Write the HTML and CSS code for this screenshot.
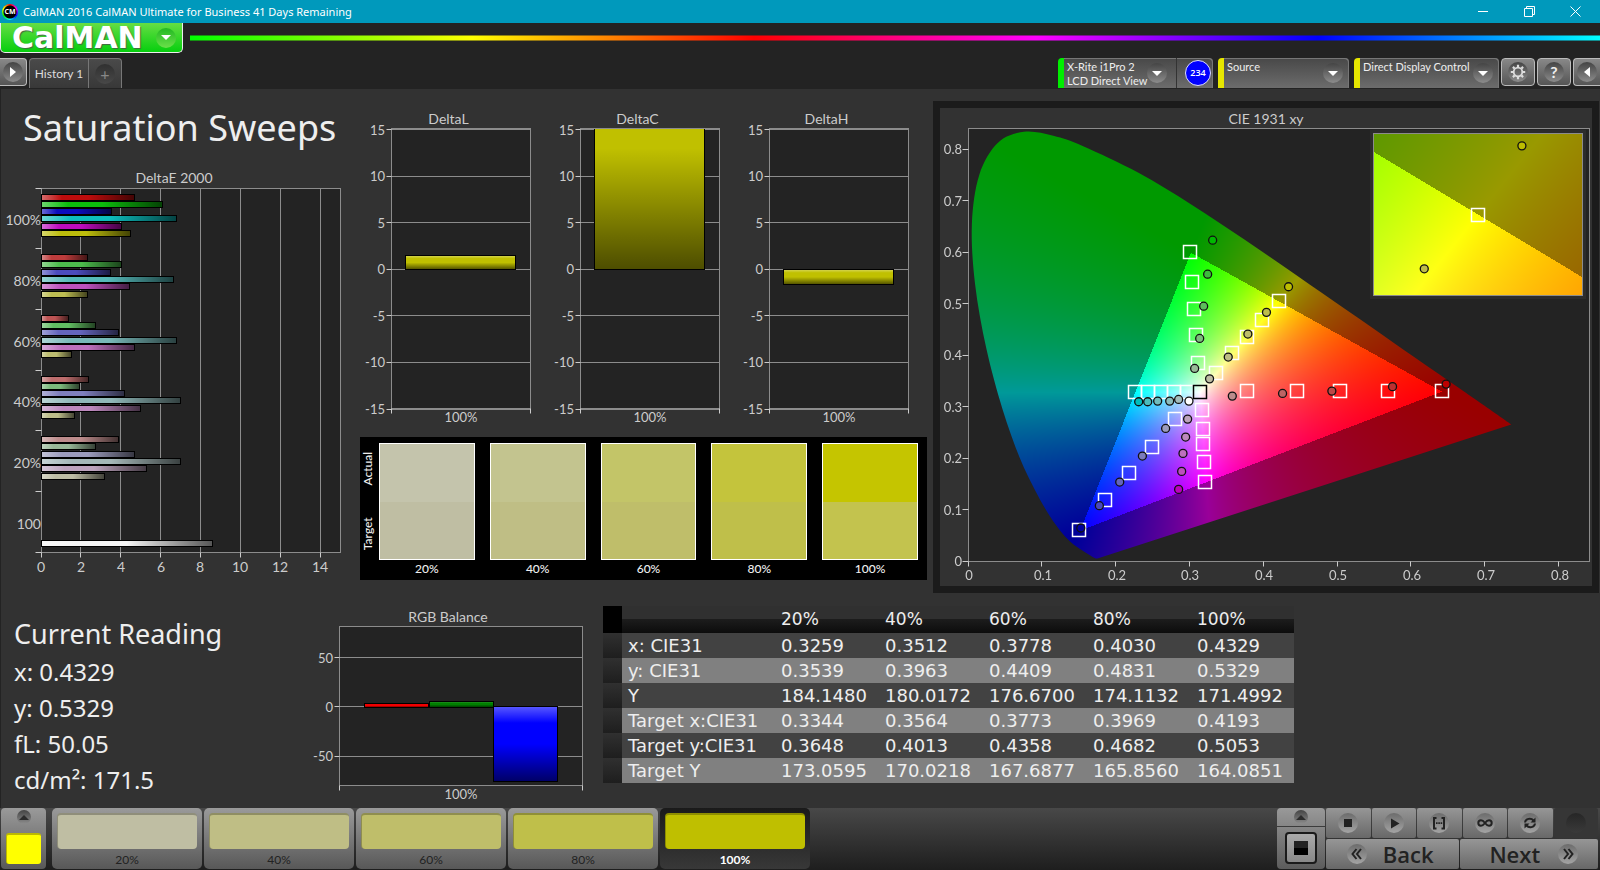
FILE: index.html
```html
<!DOCTYPE html>
<html lang="en">
<head>
    <meta charset="UTF-8">
    <meta name="viewport" content="width=device-width, initial-scale=1.0">
    <title>CalMAN 2016</title>
    <link rel="stylesheet" href="styles.css">
</head>
<body>
    <!-- Window title bar -->
    <div class="titlebar">
        <span class="app-icon">CM</span>
        <span class="app-title">CalMAN 2016 CalMAN Ultimate for Business 41 Days Remaining</span>
        <div class="window-buttons">
            <button aria-label="Minimize"><svg width="11" height="11" viewBox="0 0 11 11"><path d="M0 5.5H10"/></svg></button>
            <button aria-label="Restore"><svg width="11" height="11" viewBox="0 0 11 11"><path d="M.5 2.5H8.5V10.5H.5ZM2.5 2.5V.5H10.5V8.5H8.5"/></svg></button>
            <button aria-label="Close"><svg width="11" height="11" viewBox="0 0 11 11"><path d="M.5 .5L10.5 10.5M10.5 .5L.5 10.5"/></svg></button>
        </div>
    </div>

    <header>
        <div class="brand-row">
            <button class="logo">CalMAN <span class="logo-arrow"><span class="arrow-down"></span></span></button>
            <div class="rainbow"></div>
        </div>
        <div class="toolbar">
            <button class="tool-btn play-btn" aria-label="Show pages"><span class="round"><span class="arrow-right"></span></span></button>
            <div class="tabs">
                <button class="tab">History 1</button>
                <button class="tab tab-add" aria-label="Add history"><span class="round dark">+</span></button>
            </div>
            <div class="devices">
                <div class="device meter">
                    <button class="device-name">X-Rite i1Pro 2<br>LCD Direct View<span class="round"><span class="arrow-down"></span></span></button>
                    <span class="meter-count">234</span>
                </div>
                <div class="device source">
                    <button class="device-name">Source<span class="round"><span class="arrow-down"></span></span></button>
                </div>
                <div class="device display">
                    <button class="device-name">Direct Display Control<span class="round"><span class="arrow-down"></span></span></button>
                </div>
                <button class="tool-btn" aria-label="Settings"><span class="round">
                    <svg width="16" height="16" viewBox="0 0 16 16"><circle cx="8" cy="8" r="4.3" fill="none" stroke="#ddd" stroke-width="1.8"/><path d="M8 .8V3M8 13v2.2M.8 8H3M13 8h2.2M2.9 2.9l1.6 1.6M11.5 11.5l1.6 1.6M2.9 13.1l1.6-1.6M11.5 4.5l1.6-1.6" stroke="#ddd" stroke-width="2.2"/></svg>
                </span></button>
                <button class="tool-btn" aria-label="Help"><span class="round">?</span></button>
                <button class="tool-btn last" aria-label="Collapse"><span class="round"><span class="arrow-left"></span></span></button>
            </div>
        </div>
    </header>

    <main>
        <div class="top-row">
            <section class="sweeps">
                <h1>Saturation Sweeps</h1>
                <figure>
                    <figcaption>DeltaE 2000</figcaption>
                    <svg class="chart" id="delta-e"></svg>
                </figure>
            </section>

            <section class="middle">
                <div class="deltas">
                    <figure>
                        <figcaption>DeltaL</figcaption>
                        <svg class="chart" id="delta-l"></svg>
                    </figure>
                    <figure>
                        <figcaption>DeltaC</figcaption>
                        <svg class="chart" id="delta-c"></svg>
                    </figure>
                    <figure>
                        <figcaption>DeltaH</figcaption>
                        <svg class="chart" id="delta-h"></svg>
                    </figure>
                </div>
                <!-- Actual / target patches -->
                <div class="compare">
                    <div class="compare-labels"><span>Actual</span><span>Target</span></div>
                    <div class="patch p20"><div><i></i><b></b></div>20%</div>
                    <div class="patch p40"><div><i></i><b></b></div>40%</div>
                    <div class="patch p60"><div><i></i><b></b></div>60%</div>
                    <div class="patch p80"><div><i></i><b></b></div>80%</div>
                    <div class="patch p100"><div><i></i><b></b></div>100%</div>
                </div>
            </section>

            <section class="cie">
                <figure>
                    <figcaption>CIE 1931 xy</figcaption>
                    <div class="cie-plot">
                        <canvas id="cie-canvas"></canvas>
                        <svg class="chart" id="cie-chart"></svg>
                    </div>
                </figure>
            </section>
        </div>

        <div class="bottom-row">
            <section class="reading">
                <h2>Current Reading</h2>
                <p>x: 0.4329</p>
                <p>y: 0.5329</p>
                <p>fL: 50.05</p>
                <p>cd/m²: 171.5</p>
            </section>
            <figure class="balance">
                <figcaption>RGB Balance</figcaption>
                <svg class="chart" id="rgb-balance"></svg>
            </figure>
            <div class="data">
                <table>
                    <thead>
                        <tr><td class="grip"></td><th></th><th>20%</th><th>40%</th><th>60%</th><th>80%</th><th>100%</th></tr>
                    </thead>
                    <tbody>
                        <tr><td class="grip"></td><th>x: CIE31</th><td>0.3259</td><td>0.3512</td><td>0.3778</td><td>0.4030</td><td>0.4329</td></tr>
                        <tr><td class="grip"></td><th>y: CIE31</th><td>0.3539</td><td>0.3963</td><td>0.4409</td><td>0.4831</td><td>0.5329</td></tr>
                        <tr><td class="grip"></td><th>Y</th><td>184.1480</td><td>180.0172</td><td>176.6700</td><td>174.1132</td><td>171.4992</td></tr>
                        <tr><td class="grip"></td><th>Target x:CIE31</th><td>0.3344</td><td>0.3564</td><td>0.3773</td><td>0.3969</td><td>0.4193</td></tr>
                        <tr><td class="grip"></td><th>Target y:CIE31</th><td>0.3648</td><td>0.4013</td><td>0.4358</td><td>0.4682</td><td>0.5053</td></tr>
                        <tr><td class="grip"></td><th>Target Y</th><td>173.0595</td><td>170.0218</td><td>167.6877</td><td>165.8560</td><td>164.0851</td></tr>
                    </tbody>
                </table>
            </div>
        </div>
    </main>

    <footer>
        <button class="picker" aria-label="Pattern colour"><span class="round small"><span class="arrow-up"></span></span><span class="chip"></span></button>
        <div class="steps">
            <button class="step p20"><b></b>20%</button>
            <button class="step p40"><b></b>40%</button>
            <button class="step p60"><b></b>60%</button>
            <button class="step p80"><b></b>80%</button>
            <button class="step p100 active"><b></b>100%</button>
        </div>
        <div class="window-size">
            <button aria-label="More"><span class="round small"><span class="arrow-up"></span></span></button>
            <button aria-label="Pattern window"><span class="window-icon"></span></button>
        </div>
        <div class="controls">
            <div class="control-row">
                <button aria-label="Stop"><span class="round lit"><svg width="20" height="20" viewBox="0 0 20 20"><path d="M6 6h8v8H6z"/></svg></span></button>
                <button aria-label="Read"><span class="round lit"><svg width="20" height="20" viewBox="0 0 20 20"><path d="M7 5.5L15.5 10.5L7 15.5Z"/></svg></span></button>
                <button aria-label="Read series"><span class="round lit"><svg width="20" height="20" viewBox="0 0 20 20"><path class="line" d="M7.5 5H5v10.5H7.5M12.5 5H15v10.5H12.5"/><path d="M7 9.3h1.6v1.6H7zM9.3 9.3h1.6v1.6H9.3zM11.6 9.3h1.6v1.6h-1.6z"/></svg></span></button>
                <button aria-label="Read continuously"><span class="round lit"><svg width="20" height="20" viewBox="0 0 20 20"><path class="line" d="M10 10C8.5 8 7.5 7.3 6 7.3A2.7 2.7 0 0 0 6 12.7C7.5 12.7 8.5 12 10 10S12.5 7.3 14 7.3A2.7 2.7 0 0 1 14 12.7C12.5 12.7 11.5 12 10 10Z"/></svg></span></button>
                <button aria-label="Repeat"><span class="round lit"><svg width="20" height="20" viewBox="0 0 20 20"><path class="line" d="M5 9.5C5.5 5.5 11 4.5 13.5 7.5M15 10.5C14.5 14.5 9 15.5 6.5 12.5"/><path d="M15.5 4.5V9.5H10.5ZM4.5 15.5V10.5H9.5Z"/></svg></span></button>
                <button class="off" aria-label="Record" disabled><span class="round dark"></span></button>
            </div>
            <div class="control-row nav-row">
                <button class="back"><span class="round lit"><svg width="20" height="20" viewBox="0 0 20 20"><path class="line" d="M9.5 5L5.5 10L9.5 15M14 5L10 10L14 15"/></svg></span>Back</button>
                <button class="next">Next<span class="round lit"><svg width="20" height="20" viewBox="0 0 20 20"><path class="line" d="M6 5L10 10L6 15M10.5 5L14.5 10L10.5 15"/></svg></span></button>
            </div>
        </div>
    </footer>

    <script src="charts.js"></script>
</body>
</html>
```

FILE: styles.css
```css
* {
    box-sizing: border-box;
}
body {
    font-family: Lato, "Noto Sans", sans-serif;
    font-size: 13px;
    margin: 0;
    min-height: 100vh;
    display: flex;
    flex-direction: column;
    background-color: #232323;
    color: #ccc;
}
button {
    font: inherit;
    color: inherit;
    border: 0;
    padding: 0;
    margin: 0;
    background: none;
}
h1, h2, p, figure {
    margin: 0;
    font-weight: normal;
}

/* Title bar */
.titlebar {
    display: flex;
    align-items: center;
    height: 23px;
    padding: 0 2px;
    background-color: #0099bc;
    color: white;
    font-family: "Noto Sans", sans-serif;
    font-size: 11px;
}
.app-icon {
    width: 16px;
    height: 16px;
    margin-right: 5px;
    border-radius: 50%;
    background: radial-gradient(circle, #000 0 6px, transparent 7px), conic-gradient(red, magenta, blue, cyan, lime, yellow, red);
    font-size: 7px;
    font-weight: bold;
    line-height: 16px;
    text-align: center;
}
.window-buttons {
    margin-left: auto;
    display: flex;
}
.window-buttons button {
    width: 46px;
    height: 23px;
}
.window-buttons svg {
    display: block;
    margin: 0 auto;
    fill: none;
    stroke: white;
}

/* Header */
.brand-row {
    display: flex;
    height: 30px;
}
.logo {
    display: flex;
    align-items: center;
    justify-content: space-between;
    width: 183px;
    padding: 0 6px 0 11px;
    border: solid #eee;
    border-width: 0 1px 1px;
    border-radius: 0 0 5px 5px;
    background: linear-gradient(#66dd44, #06cf0e);
    color: white;
    font-family: "DejaVu Sans", sans-serif;
    font-size: 30px;
    font-weight: bold;
    line-height: 28px;
    text-shadow: 1px 1px 1px #464;
}
.logo-arrow {
    display: flex;
    align-items: center;
    justify-content: center;
    width: 20px;
    height: 20px;
    border-radius: 50%;
    background: linear-gradient(#22b822, #6be04a);
}
.rainbow {
    flex: 1;
    height: 6px;
    margin: 12px 0 0 7px;
    background: linear-gradient(90deg, #0f0, #ff0, #f00, #f0f, #00f, #0ff);
    border: solid rgba(35, 35, 35, 0.5);
    border-width: 1px 0;
}
.toolbar {
    display: flex;
    height: 36px;
    padding-top: 5px;
}
.round {
    display: flex;
    align-items: center;
    justify-content: center;
    width: 20px;
    height: 20px;
    border-radius: 50%;
    background: linear-gradient(#444, #8c8c8c);
    color: #eee;
    font-size: 16px;
    font-weight: bold;
    line-height: 20px;
}
.round.small {
    width: 14px;
    height: 14px;
}
.round.small .arrow-up {
    border-width: 0 5px 5px;
    border-bottom-color: #2c2c2c;
}
.round.dark {
    background: linear-gradient(#303030, #484848);
    color: #888;
    font-weight: normal;
}
.round.lit {
    background: linear-gradient(#6c6c6c, #a4a4a4);
}
.round.lit svg {
    fill: #222;
}
.round.lit .line {
    fill: none;
    stroke: #222;
    stroke-width: 2;
}
.arrow-down, .arrow-up, .arrow-left, .arrow-right {
    border: solid transparent;
}
.arrow-down {
    border-width: 5px 5px 0;
    border-top-color: white;
}
.arrow-up {
    border-width: 0 5px 5px;
    border-bottom-color: white;
}
.arrow-right {
    border-width: 5px 0 5px 6px;
    border-left-color: white;
}
.arrow-left {
    border-width: 5px 6px 5px 0;
    border-right-color: white;
}
.tool-btn {
    display: flex;
    align-items: center;
    justify-content: center;
    width: 34px;
    height: 28px;
    border: 1px solid #bbb;
    border-radius: 4px;
    background: linear-gradient(#888, #555);
}
.play-btn {
    width: 27px;
    border-left: 0;
    border-radius: 0 4px 4px 0;
}
.tool-btn.last {
    width: 27px;
    border-right: 0;
    border-radius: 4px 0 0 4px;
}
.tabs {
    display: flex;
    height: 30px;
    margin-left: 2px;
    border: 1px solid #777;
    border-bottom: 0;
    border-radius: 4px 4px 0 0;
    background: linear-gradient(#4a4a4a, #383838);
}
.tab {
    width: 58px;
    font-size: 12px;
    color: #ddd;
}
.tab-add {
    display: flex;
    align-items: center;
    justify-content: center;
    width: 33px;
    border-left: 1px solid #777;
}
.devices {
    display: flex;
    gap: 2px;
    margin-left: auto;
}
.device {
    display: flex;
    height: 30px;
    margin-right: 3px;
    border-radius: 4px 4px 0 0;
    border-left: 6px solid #e6e600;
    background: linear-gradient(#484848, #6c6c6c);
    box-shadow: inset -1px 1px #777;
}
.device-name {
    position: relative;
    width: 100%;
    padding: 1px 0 0 3px;
    color: #eee;
    font-size: 11px;
    line-height: 14px;
    text-align: left;
    display: block;
    height: 30px;
}
.device-name .round {
    position: absolute;
    right: 6px;
    top: 5px;
}
.source .device-name, .display .device-name {
    padding-bottom: 14px;
}
.meter {
    width: 155px;
    border-color: #0e0;
}
.source {
    width: 131px;
}
.display {
    width: 145px;
    margin-right: 0;
}
.meter-count {
    flex: none;
    width: 26px;
    height: 26px;
    margin: 2px 2px 0 8px;
    border: 1px solid #ddf;
    border-radius: 50%;
    background-color: #00f;
    color: white;
    font-family: "Open Sans", sans-serif;
    font-size: 9px;
    font-weight: 600;
    line-height: 24px;
    text-align: center;
}
.meter .device-name {
    border-right: 1px solid #333;
}
.meter .device-name .round {
    right: 9px;
}

/* Main area */
main {
    flex: 1;
    display: grid;
    grid-template-rows: 504fr 215fr;
    border-left: 1px solid #232323;
    background-color: #323232;
}
.top-row {
    display: grid;
    grid-template-columns: 349fr 583fr 667fr;
}
figure {
    display: flex;
    flex-direction: column;
}
figcaption {
    height: 18px;
    font-size: 14px;
    line-height: 18px;
    text-align: center;
}
.chart {
    display: block;
    flex: 1;
    width: 100%;
    min-height: 0;
    height: 0;
    overflow: visible;
    font-size: 13px;
}
.chart text {
    fill: #ccc;
}
.sweeps, .middle {
    display: flex;
    flex-direction: column;
    padding-bottom: 13px;
}
.sweeps figure {
    flex: 1;
}
.sweeps figcaption {
    padding-right: 3px;
}
.sweeps .chart {
    font-size: 14px;
}
h1 {
    height: 80px;
    padding-left: 22px;
    color: #eee;
    font-family: "Noto Sans", sans-serif;
    font-size: 36px;
    line-height: 78px;
}
.deltas {
    flex: 1;
    display: flex;
    padding: 21px 16px 10px 0;
}
.deltas figure {
    flex: 1;
}
.deltas figcaption {
    padding-left: 8px;
}

/* Actual / target patches */
.compare {
    display: flex;
    gap: 15px;
    height: 143px;
    margin: 0 6px 0 10px;
    padding: 6px 9px 0 0;
    background-color: black;
    color: #eee;
    font-size: 12px;
    font-weight: 500;
}
.compare-labels {
    display: flex;
    flex-direction: row-reverse;
    justify-content: space-around;
    width: 130px;
    height: 16px;
    margin: 50px -69px 0 -57px;
    transform: rotate(-90deg);
    line-height: 16px;
}
.patch {
    flex: 1;
    line-height: 18px;
    text-align: center;
}
.patch div {
    display: flex;
    flex-direction: column;
    height: 117px;
    border: 1px solid white;
}
.patch i, .patch b {
    flex: 1;
}
.p20 i { background-color: #c4c4ac; }
.p20 b { background-color: #bfbea3; }
.p40 i { background-color: #c3c48f; }
.p40 b { background-color: #bfbe85; }
.p60 i { background-color: #c3c568; }
.p60 b { background-color: #bfbe6a; }
.p80 i { background-color: #c4c43c; }
.p80 b { background-color: #bfbf4a; }
.p100 i { background-color: #c5c500; }
.p100 b { background-color: #c3c34e; }

/* CIE diagram */
.cie {
    display: flex;
    padding: 12px 1px 0 0;
}
.cie figure {
    flex: 1;
    border: 7px solid #1b1b1b;
}
.cie figcaption {
    height: 20px;
    line-height: 21px;
}
.cie-plot {
    flex: 1;
    display: flex;
    position: relative;
}
.cie-plot canvas {
    position: absolute;
    left: 0;
    top: 0;
    width: 100%;
    height: 100%;
}
.cie-plot .chart {
    position: relative;
    height: auto;
}

/* Bottom row */
.bottom-row {
    display: grid;
    grid-template-columns: 310fr 292fr 997fr;
}
.reading {
    padding: 21px 0 0 13px;
    color: #eee;
    font-family: "Noto Sans", sans-serif;
}
h2 {
    font-size: 27px;
    line-height: 40px;
}
.reading p {
    font-size: 24px;
    line-height: 36px;
}
.balance {
    padding: 15px 0 5px;
}
.balance figcaption {
    padding-right: 18px;
}
.data {
    padding-top: 13px;
}
table {
    width: 691px;
    border-collapse: collapse;
    table-layout: fixed;
    color: #eee;
    font-family: "DejaVu Sans", sans-serif;
    font-size: 18px;
}
td, th {
    height: 25px;
    padding: 0;
    font-weight: normal;
    text-align: left;
    line-height: 25px;
}
tbody tr {
    background-color: #424242;
}
tbody tr:nth-child(even) {
    background-color: #808080;
}
tbody th {
    padding-left: 6px;
}
thead tr {
    background: linear-gradient(#303030 0 48%, #1c1c1c 50%, #0c0c0c);
}
thead th {
    height: 27px;
    width: 104px;
    line-height: 27px;
    font-size: 17px;
}
thead th:nth-child(2) {
    width: 159px;
}
thead th:last-child {
    width: 97px;
}
.grip {
    width: 19px;
    background: linear-gradient(#303030, #1e1e1e);
}
thead .grip {
    background: black;
}

/* Footer */
footer {
    display: flex;
    height: 62px;
    padding: 0 2px 1px 1px;
    background: linear-gradient(#484848, #1e1e1e);
}
footer button {
    background: linear-gradient(#9a9a9a, #585858);
}
.picker {
    display: flex;
    flex-direction: column;
    align-items: center;
    width: 45px;
    padding-top: 2px;
    border-radius: 4px;
}
.chip {
    width: 35px;
    height: 31px;
    margin-top: 9px;
    border: solid #bbb800;
    border-width: 2px 0 0 1px;
    border-radius: 3px;
    background-color: #ff0;
}
.steps {
    flex: 1;
    display: flex;
    gap: 2px;
    margin-left: 6px;
}
.step {
    flex: 0 1 150px;
    padding: 5px 5px 3px;
    border-radius: 5px;
    color: #222;
    font-size: 12px;
    line-height: 22px;
}
.step b {
    display: block;
    height: 36px;
    border: solid rgba(0, 0, 0, 0.25);
    border-width: 2px 0 0 1px;
    border-radius: 4px;
}
footer .step.active {
    background: linear-gradient(#1a1a1a, #383838);
    color: white;
    font-weight: bold;
}
.step.active b {
    background-color: #bfbf00;
}
.window-size {
    display: flex;
    flex-direction: column;
    gap: 1px;
    width: 48px;
    margin-right: 1px;
}
.window-size button {
    display: flex;
    align-items: center;
    justify-content: center;
    height: 18px;
    border-radius: 4px 4px 0 0;
    background: linear-gradient(#999, #868686);
}
.window-size button + button {
    height: 42px;
    border-radius: 0 0 4px 4px;
    background: linear-gradient(#868686, #5c5c5c);
}
.window-icon {
    width: 32px;
    height: 32px;
    border: 2px solid #1a1a1a;
    border-radius: 4px;
    background: linear-gradient(#222 0 50%, #000 50%) center / 14px 14px no-repeat, linear-gradient(#aaa, #888);
}
.controls {
    width: 272px;
    display: flex;
    flex-direction: column;
    gap: 1px;
}
.control-row {
    display: flex;
    flex: 1;
    gap: 1px;
}
.control-row button {
    flex: 1;
    display: flex;
    align-items: center;
    justify-content: center;
    border-radius: 2px;
    background: linear-gradient(#969696, #686868);
}
.control-row .off {
    background: #363636;
}
.off .round.dark {
    background: linear-gradient(#262626, #3a3a3a);
}
.nav-row button {
    gap: 16px;
    color: #222;
    font-family: "Open Sans", sans-serif;
    font-size: 22px;
    font-weight: 600;
    line-height: 28px;
}
.nav-row .back {
    padding-right: 4px;
}
.nav-row .next {
    gap: 18px;
    padding-left: 10px;
}
```

FILE: charts.js
```js
const NS_DEFS = `
    <linearGradient id="shade-h">
        <stop offset="0" stop-color="#fff" stop-opacity="0.4"/>
        <stop offset="0.22" stop-color="#fff" stop-opacity="0"/>
        <stop offset="0.5" stop-color="#000" stop-opacity="0"/>
        <stop offset="1" stop-color="#000" stop-opacity="0.65"/>
    </linearGradient>
    <linearGradient id="shade-v" x2="0" y2="1">
        <stop offset="0" stop-color="#fff" stop-opacity="0.35"/>
        <stop offset="0.22" stop-color="#fff" stop-opacity="0"/>
        <stop offset="0.5" stop-color="#000" stop-opacity="0"/>
        <stop offset="1" stop-color="#000" stop-opacity="0.6"/>
    </linearGradient>`;

// Snap to the pixel grid so that 1px lines stay sharp
const snap = v => Math.floor(v) + 0.5;

function line(x1, y1, x2, y2, color) {
    return `<path d="M${snap(x1)} ${snap(y1)}L${snap(x2)} ${snap(y2)}" stroke="${color}"/>`;
}

function text(x, y, anchor, value) {
    return `<text x="${Math.round(x)}" y="${Math.round(y)}" text-anchor="${anchor}">${value}</text>`;
}

function frame(x, y, w, h, fill) {
    return `<rect x="${snap(x)}" y="${snap(y)}" width="${Math.round(w)}" height="${Math.round(h)}" fill="${fill}" stroke="#8c8c8c"/>`;
}

function bar(x, y, w, h, color, shade) {
    const box = `x="${snap(x)}" y="${snap(y)}" width="${Math.round(w)}" height="${Math.round(h)}"`;
    return `<rect ${box} fill="${color}"/><rect ${box} fill="url(#${shade})" stroke="#000"/>`;
}

// DeltaE 2000: one group of six colours per saturation level
const deltaE = [
    ['100%', [4.74, 6.10, 3.58, 6.80, 4.05, 4.50], ['#bd0c0c', '#0cbd0c', '#0c0cbd', '#0cbdbd', '#bd0cbd', '#bdbd0c']],
    ['80%', [2.34, 4.05, 3.53, 6.67, 4.44, 2.34], ['#bd3c3c', '#4cbd4c', '#4c4cbd', '#55b9b9', '#bd52bd', '#bdbd52']],
    ['60%', [1.38, 2.74, 3.90, 6.80, 4.74, 1.57], ['#bd5454', '#62bd62', '#6565bd', '#78b8b8', '#bd70bd', '#bdbd70']],
    ['40%', [2.39, 1.94, 4.19, 7.00, 5.04, 1.69], ['#bd6d6d', '#7cb97c', '#7f7fbd', '#90b8b8', '#bd88bd', '#bdbd8a']],
    ['20%', [3.90, 2.74, 4.71, 7.00, 5.31, 3.20], ['#bd8c8c', '#98b898', '#9c9cbd', '#a5b8b8', '#bda3bd', '#bdbda4']],
    ['100', [8.61], ['#f4f4f4']]
];

function drawDeltaE() {
    const svg = document.getElementById('delta-e');
    const left = 40, top = 1, right = svg.clientWidth - 10, bottom = svg.clientHeight - 28;
    const unit = (right - left) / 15, group = (bottom - top) / 6;
    let out = `<defs>${NS_DEFS}</defs>` + frame(left, top, right - left, bottom - top, '#232323');
    for (let v = 0; v < 15; v += 2) {
        const x = left + v * unit;
        if (v) out += line(x, top, x, bottom, '#8c8c8c');
        out += line(x, bottom, x, bottom + 5, '#ccc') + text(x, bottom + 20, 'middle', v);
    }
    deltaE.forEach(([label, values, colors], g) => {
        const y = top + g * group;
        out += line(left - 6, y, left, y, '#ccc') + text(left, y + group / 2 + 7, 'end', label);
        values.forEach((value, i) => {
            const start = values.length === 1 ? group - 12 : 6 + i * 7.3;
            out += bar(left, y + start, value * unit - 1, 6, colors[i], 'shade-h');
        });
    });
    out += line(left - 6, bottom, left, bottom, '#ccc');
    svg.innerHTML = out;
}

// Column charts: DeltaL, DeltaC, DeltaH and RGB balance
function drawColumns(id, o) {
    const svg = document.getElementById(id);
    const left = o.left, top = 0, right = svg.clientWidth - o.right, bottom = svg.clientHeight - o.bottom;
    const scale = (bottom - top) / (o.max - o.min);
    const yOf = v => top + 1 + (o.max - v) * scale;
    let out = `<defs><clipPath id="${id}-clip"><rect x="${left}" y="${top + 1}" width="${right - left}" height="${bottom - top + 1}"/></clipPath></defs>`;
    out += frame(left, top, right - left, bottom - top, '#232323');
    o.ticks.forEach(v => {
        const y = yOf(v);
        out += line(left, y, right, y, '#8c8c8c') + line(left - 5, y, left, y, '#ccc') + text(left - 6, y + 5, 'end', v);
    });
    out += line(left, bottom, left, bottom + 5, '#ccc') + line(right, bottom, right, bottom + 5, '#ccc');
    out += text((left + right) / 2, bottom + 14, 'middle', '100%');
    const w = (right - left) * 0.8 / o.bars.length;
    out += `<g clip-path="url(#${id}-clip)">`;
    o.bars.forEach(([value, color], i) => {
        const y = yOf(Math.max(value, 0));
        out += bar(left + 1 + (right - left) * 0.1 + i * w, y, w - 1, Math.abs(value) * scale, color, 'shade-v');
    });
    svg.innerHTML = out + '</g>';
}

// CIE 1931 diagram
const locus = [
    [.1741, .0050], [.1714, .0051], [.1689, .0069], [.1644, .0109], [.1566, .0177], [.1440, .0297], [.1355, .0399],
    [.1241, .0578], [.1096, .0868], [.0913, .1327], [.0687, .2007], [.0454, .2950], [.0235, .4127], [.0082, .5384],
    [.0039, .6548], [.0139, .7502], [.0389, .8120], [.0743, .8338], [.1142, .8262], [.1547, .8059], [.2296, .7543],
    [.3016, .6923], [.3731, .6245], [.4441, .5547], [.5125, .4866], [.5752, .4242], [.6270, .3725], [.6658, .3340],
    [.6915, .3083], [.7190, .2809], [.7347, .2653]
];
const targets = [
    [.2985, .602], [.3016, .5437], [.3039, .49], [.307, .44], [.3093, .3858],
    [.419, .5063], [.3959, .4686], [.3761, .4369], [.3553, .4052], [.3337, .367],
    [.224, .3295], [.2421, .3295], [.2597, .3295], [.2768, .3295], [.2944, .3295],
    [.3761, .332], [.4433, .332], [.5026, .332], [.5665, .332], [.6396, .332],
    [.3147, .2945], [.3161, .2576], [.3161, .2278], [.3179, .1935], [.3192, .1553],
    [.2786, .277], [.247, .2227], [.2159, .1722], [.1834, .1204], [.1482, .0621]
];
const readings = [
    [.3301, .6233, '#00b900'], [.3233, .5573, '#3cbd3c'], [.3179, .4951, '#5cbd5c'], [.3125, .4324, '#7cbd7c'], [.3057, .3741, '#98bd98'],
    [.4329, .5329, '#bdbd00'], [.4030, .4831, '#bdbd4a'], [.3778, .4409, '#bdbd6a'], [.3512, .3963, '#bdbd85'], [.3259, .3539, '#bdbda3'],
    [.2299, .3094, '#00bdbd'], [.2421, .3094, '#4cbdbd'], [.2556, .3107, '#70bdbd'], [.2719, .3107, '#8cbdbd'], [.284, .3139, '#a3bdbd'], [.298, .3107, '#fff'],
    [.3567, .3204, '#bd8c8c'], [.4248, .3256, '#bd6464'], [.4916, .3301, '#bd4848'], [.5738, .3388, '#bd3030'], [.6464, .3437, '#bd0000'],
    [.2962, .2757, '#bda3bd'], [.2935, .2408, '#bd88bd'], [.2899, .2091, '#bd70bd'], [.2881, .1741, '#bd50bd'], [.284, .1391, '#bd00bd'],
    [.2664, .2576, '#9c9cbd'], [.2349, .2039, '#7c7cbd'], [.2042, .1534, '#6464bd'], [.1766, .1074, '#4848bd'], [.1515, .0641, '#0000a0']
];

// Chromaticity to display colour, dimmed outside the Rec.709 triangle
function xyToRgb(x, y) {
    const X = x / y, Z = (1 - x - y) / y;
    const rgb = [
        3.2406 * X - 1.5372 - 0.4986 * Z,
        -0.9689 * X + 1.8758 + 0.0415 * Z,
        0.0557 * X - 0.2040 + 1.0570 * Z
    ];
    const dim = Math.min(...rgb) < 0 ? 0.6 : 1;
    const max = Math.max(...rgb);
    return rgb.map(c => 255 * dim * Math.max(c, 0) / max);
}

function gamutImage(w, h, x0, y0, x1, y1) {
    const buffer = document.createElement('canvas');
    buffer.width = w;
    buffer.height = h;
    const ctx = buffer.getContext('2d');
    const img = ctx.createImageData(w, h);
    for (let j = 0; j < h; j++) {
        for (let i = 0; i < w; i++) {
            const c = xyToRgb(x0 + (x1 - x0) * i / w, Math.max(y1 - (y1 - y0) * j / h, 0.0001));
            img.data.set([c[0], c[1], c[2], 255], (j * w + i) * 4);
        }
    }
    ctx.putImageData(img, 0, 0);
    return buffer;
}

function square(x, y, color) {
    return `<rect x="${snap(x - 6)}" y="${snap(y - 6)}" width="13" height="13" fill="none" stroke="${color}" stroke-width="1.5"/>`;
}

function dot(x, y, color) {
    return `<circle cx="${x}" cy="${y}" r="4" fill="${color}" stroke="#111" stroke-width="1.3"/>`;
}

function drawCie() {
    const svg = document.getElementById('cie-chart');
    const canvas = document.getElementById('cie-canvas');
    const W = canvas.width = svg.clientWidth, H = canvas.height = svg.clientHeight;
    const left = 28, top = 0, right = W - 3, bottom = H - 25, range = 0.8413;
    const px = x => left + 1 + x / range * (right - left);
    const py = y => bottom - y / range * (bottom - top);

    const ctx = canvas.getContext('2d');
    ctx.fillStyle = '#232323';
    ctx.fillRect(left, top, right - left, bottom - top);
    ctx.save();
    ctx.beginPath();
    ctx.moveTo(px(locus[0][0]), py(locus[0][1]));
    for (let i = 0; i < locus.length - 1; i++) {
        const a = locus[Math.max(i - 1, 0)], b = locus[i], c = locus[i + 1], d = locus[Math.min(i + 2, locus.length - 1)];
        ctx.bezierCurveTo(
            px(b[0] + (c[0] - a[0]) / 6), py(b[1] + (c[1] - a[1]) / 6),
            px(c[0] - (d[0] - b[0]) / 6), py(c[1] - (d[1] - b[1]) / 6),
            px(c[0]), py(c[1]));
    }
    ctx.closePath();
    ctx.clip();
    ctx.drawImage(gamutImage(right - left, bottom - top, 0, 0, range, range), left + 1, top);
    ctx.restore();

    // Magnified view around the current target
    const iw = Math.round(W * 0.32), ih = Math.round(H * 0.353), ix = right - iw - 7, iy = top + 5;
    const cx = 0.4193, cy = 0.5053, sx = 0.064, sy = 0.0656;
    ctx.fillStyle = '#2c2c2c';
    ctx.fillRect(ix - 3, iy - 3, iw + 7, ih + 7);
    ctx.drawImage(gamutImage(iw, ih, cx - sx / 2, cy - sy / 2, cx + sx / 2, cy + sy / 2), ix, iy);

    let out = frame(left, top, right - left, bottom - top, 'none');
    for (let k = 0; k <= 8; k++) {
        const label = k ? '0.' + k : '0';
        out += line(px(k / 10) - 1, bottom, px(k / 10) - 1, bottom + 5, '#ccc') + text(px(k / 10), bottom + 19, 'middle', label);
        out += line(left - 6, py(k / 10), left, py(k / 10), '#ccc') + text(left - 6, py(k / 10) + 5, 'end', label);
    }
    targets.forEach(([x, y]) => { out += square(px(x), py(y), '#fff'); });
    out += square(px(0.3125), py(0.3295), '#000');
    readings.forEach(([x, y, c]) => { out += dot(px(x), py(y), c); });

    const zx = x => ix + iw / 2 + (x - cx) / sx * iw, zy = y => iy + ih / 2 - (y - cy) / sy * ih;
    out += frame(ix, iy, iw, ih, 'none') + square(zx(cx), zy(cy), '#fff');
    out += dot(zx(0.4329), zy(0.5329), '#bdbd00') + dot(zx(0.4030), zy(0.4831), '#bdbd4a');
    svg.innerHTML = out;
}

function drawAll() {
    const delta = { left: 41, right: 9, bottom: 19, min: -15, max: 15.1, ticks: [15, 10, 5, 0, -5, -10, -15] };
    drawDeltaE();
    drawColumns('delta-l', { ...delta, bars: [[1.5, '#c0c000']] });
    drawColumns('delta-c', { ...delta, bars: [[26, '#c0c000']] });
    drawColumns('delta-h', { ...delta, bars: [[-1.6, '#c0c000']] });
    drawColumns('rgb-balance', {
        left: 28, right: 21, bottom: 18, min: -80.5, max: 81.5, ticks: [50, 0, -50],
        bars: [[4, '#f00000'], [6, '#008000'], [-76, '#0000ff']]
    });
    drawCie();
}

drawAll();
window.addEventListener('resize', drawAll);
```
